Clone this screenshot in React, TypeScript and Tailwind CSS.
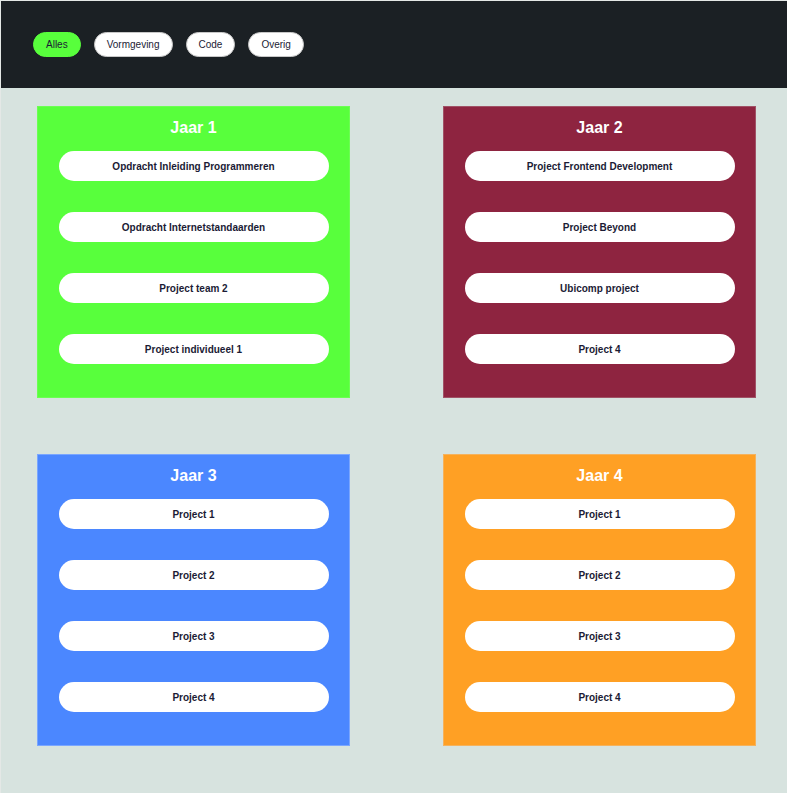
const filters = ["Alles", "Vormgeving", "Code", "Overig"];

const years = [
  {
    title: "Jaar 1",
    bg: "bg-[#58ff3c] border-[#6bff52]",
    items: [
      "Opdracht Inleiding Programmeren",
      "Opdracht Internetstandaarden",
      "Project team 2",
      "Project individueel 1",
    ],
  },
  {
    title: "Jaar 2",
    bg: "bg-[#8e2440] border-[#a05266]",
    items: ["Project Frontend Development", "Project Beyond", "Ubicomp project", "Project 4"],
  },
  {
    title: "Jaar 3",
    bg: "bg-[#4b87ff] border-[#7aa6ff]",
    items: ["Project 1", "Project 2", "Project 3", "Project 4"],
  },
  {
    title: "Jaar 4",
    bg: "bg-[#ffa024] border-[#f5b25c]",
    items: ["Project 1", "Project 2", "Project 3", "Project 4"],
  },
];

const YearCard = ({ title, bg, items }: { title: string; bg: string; items: string[] }) => (
  <section className={`${bg} border w-[313px] h-[292px] flex flex-col items-center pt-[11px]`}>
    <h2 className="text-[16px] leading-[20px] font-bold text-white">{title}</h2>
    <ul className="mt-[13px] flex flex-col gap-[31px]">
      {items.map((item, i) => (
        <li key={i}>
          <button className="w-[270px] h-[30px] rounded-full bg-white text-[10px] font-bold text-[#1b1b35]">
            {item}
          </button>
        </li>
      ))}
    </ul>
  </section>
);

export default function App() {
  return (
    <div
      className="min-h-[793px] bg-[#d7e3df] border-l border-t border-[#e4e8e6]"
      style={{ fontFamily: '"Liberation Sans", Arial, sans-serif' }}
    >
      {/* Filter bar */}
      <header className="h-[87px] bg-[#1b2024] flex items-center gap-[13px] pl-[32px]">
        {filters.map((f, i) => (
          <button
            key={f}
            className={`h-[25px] px-[12px] rounded-full text-[10px] border ${
              i === 0
                ? "bg-[#58ff3c] border-[#58ff3c] text-[#1b1b35]"
                : "bg-white border-[#c8c8c8] text-[#1b1b35]"
            }`}
          >
            {f}
          </button>
        ))}
      </header>

      {/* Years */}
      <main className="grid grid-cols-[313px_313px] gap-x-[93px] gap-y-[56px] pl-[36px] pt-[18px] pb-[48px]">
        {years.map((y) => (
          <YearCard key={y.title} {...y} />
        ))}
      </main>
    </div>
  );
}
